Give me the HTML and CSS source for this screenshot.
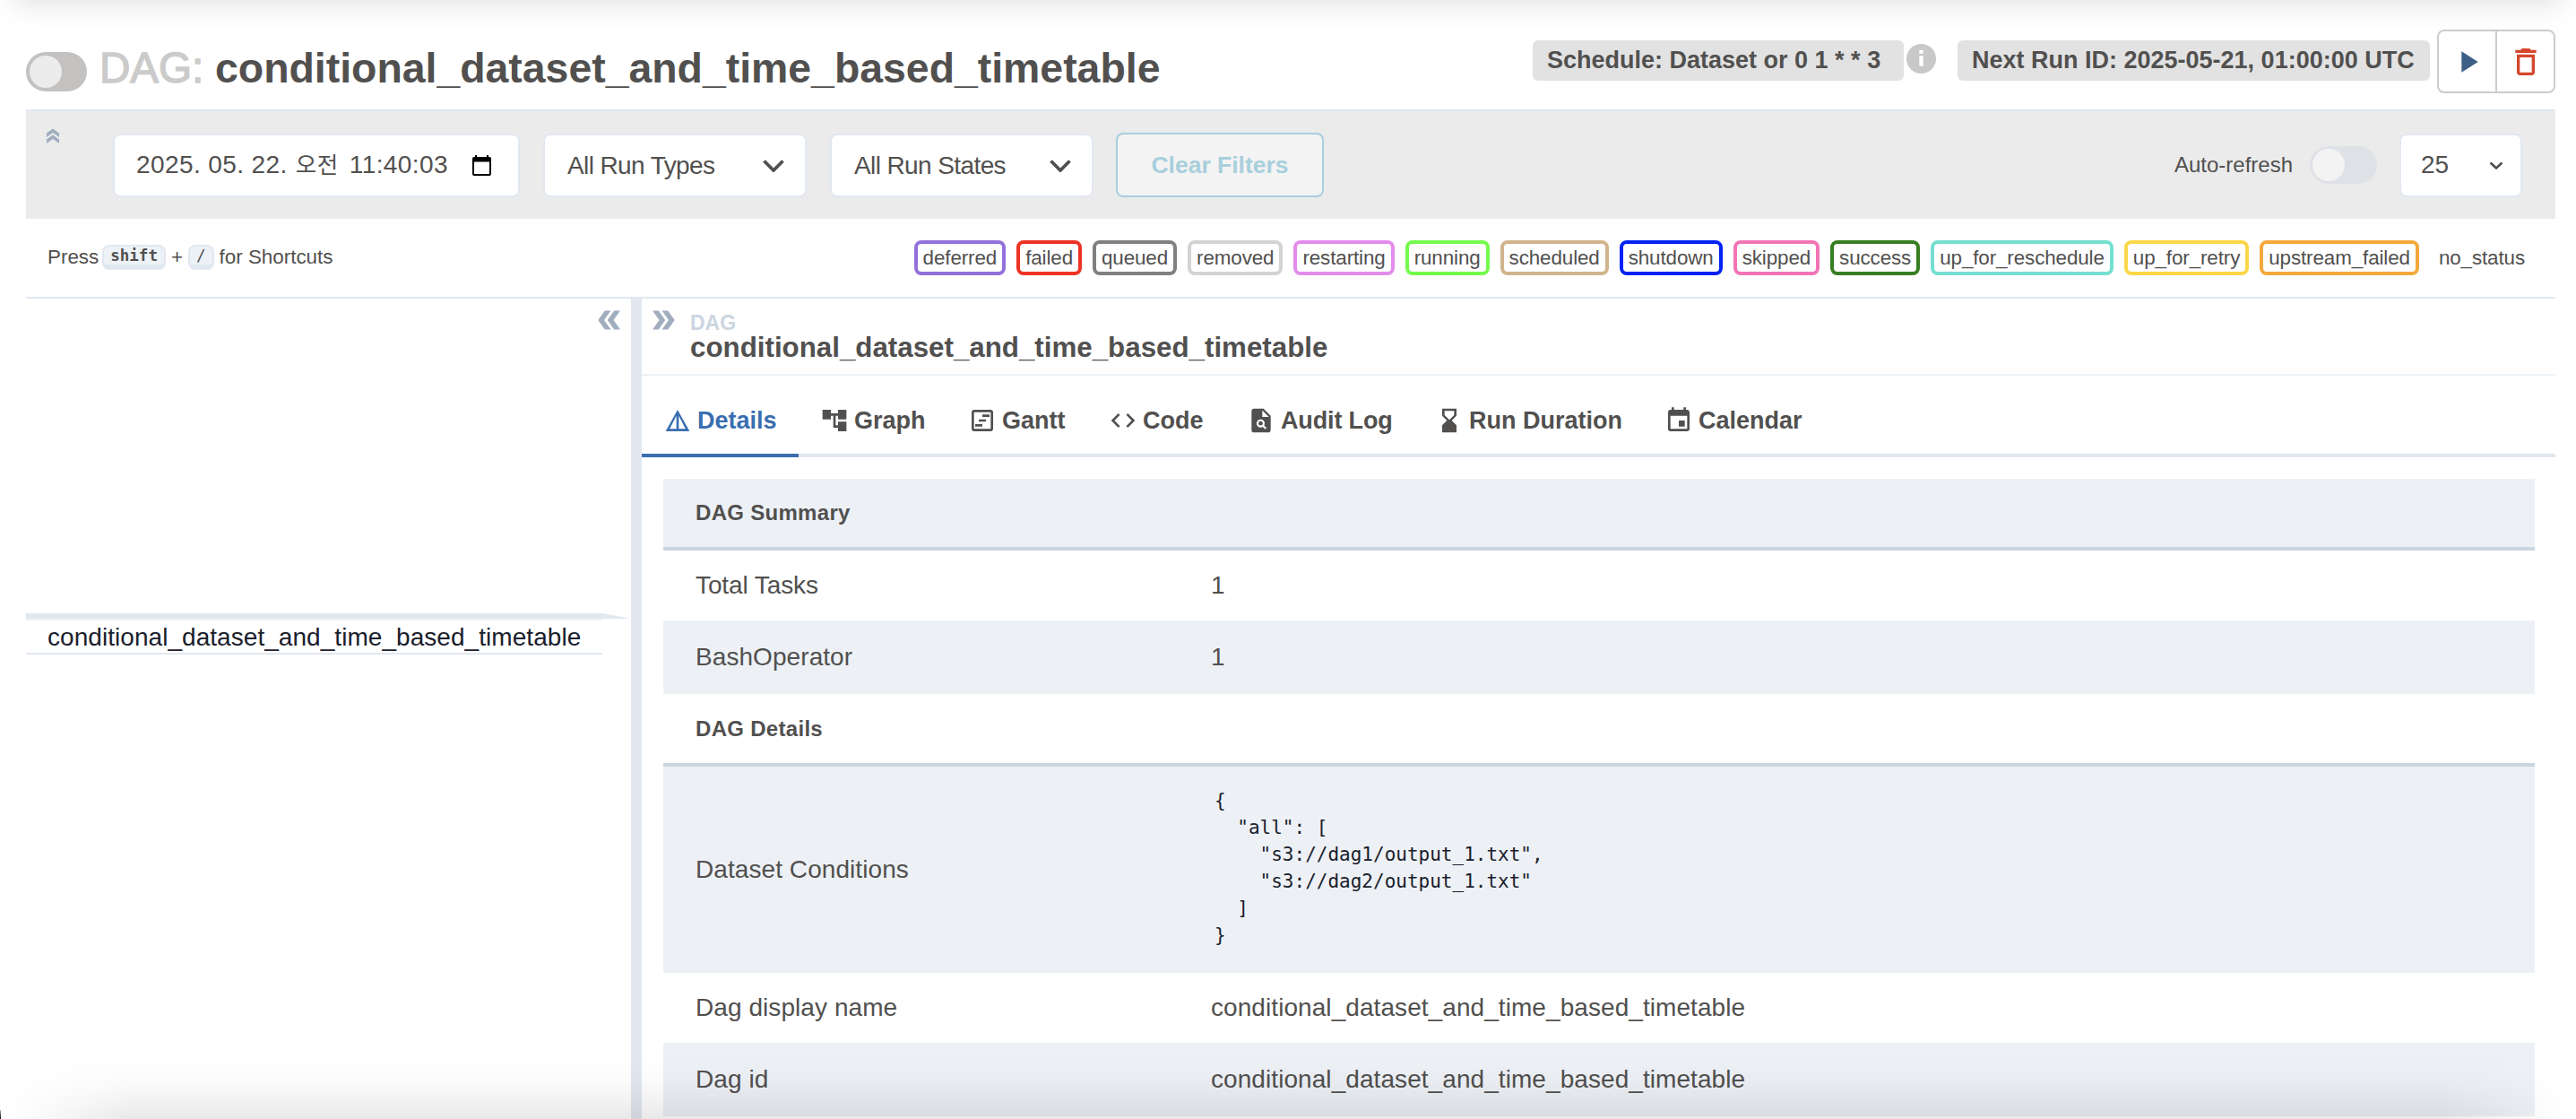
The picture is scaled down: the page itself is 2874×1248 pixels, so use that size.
FILE: index.html
```html
<!DOCTYPE html>
<html lang="ko">
<head>
    <meta charset="UTF-8">
    <meta name="viewport" content="width=device-width, initial-scale=1.0">
    <title>conditional_dataset_and_time_based_timetable - Airflow</title>
    <link rel="stylesheet" href="styles.css">
</head>
<body>
    <div class="nav-shadow"></div>

    <header class="dag-header">
        <span class="toggle"><span class="knob"></span></span>
        <h3 class="dag-title"><span class="muted">DAG:</span><strong>conditional_dataset_and_time_based_timetable</strong></h3>
        <div class="dag-meta">
            <span class="label schedule">Schedule: Dataset or 0 1 * * 3</span>
            <svg class="info" viewBox="0 0 24 24"><circle cx="12" cy="12" r="12"/><path d="M10.4 5h3.2v2.9h-3.2zM10.4 9.6h3.2V18h-3.2z"/></svg>
            <span class="label next-run">Next Run ID: 2025-05-21, 01:00:00 UTC</span>
            <div class="btn-group">
                <button class="play"><svg viewBox="0 0 24 24"><path d="M8 5v14l11-7z"/></svg></button>
                <button class="delete"><svg viewBox="0 0 24 24"><path d="M6 19c0 1.1.9 2 2 2h8c1.1 0 2-.9 2-2V7H6v12zM8 9h8v10H8V9zm7.5-5l-1-1h-5l-1 1H5v2h14V4z"/></svg></button>
            </div>
        </div>
    </header>

    <section class="filters">
        <svg class="double-arrow up" viewBox="0 0 24 24"><path d="M15.5 5H11l5 7-5 7h4.5l5-7zM8.5 5H4l5 7-5 7h4.5l5-7z"/></svg>
        <div class="field date">
            <span>2025. 05. 22. <span class="ampm">오전</span> 11:40:03</span>
            <svg viewBox="0 0 21 23"><path d="M3 0h2v2h11V0h2v2h1a2 2 0 0 1 2 2v17a2 2 0 0 1-2 2H2a2 2 0 0 1-2-2V4a2 2 0 0 1 2-2h1zM2 7.500v13.500h17V7.500z"/></svg>
        </div>
        <div class="field select">
            <span>All Run Types</span>
            <svg viewBox="0 0 24 14"><path d="M1.500 1.500L12 12 22.500 1.500"/></svg>
        </div>
        <div class="field select">
            <span>All Run States</span>
            <svg viewBox="0 0 24 14"><path d="M1.500 1.500L12 12 22.500 1.500"/></svg>
        </div>
        <button class="clear">Clear Filters</button>
        <span class="auto-refresh">Auto-refresh</span>
        <span class="switch"><span class="knob"></span></span>
        <div class="field count">
            <span>25</span>
            <svg viewBox="0 0 16 9"><path d="M1.500 1.500L8 7.500 14.500 1.500"/></svg>
        </div>
    </section>

    <section class="legend">
        <div class="shortcuts">Press <kbd>shift</kbd> + <kbd class="slash">/</kbd> for Shortcuts</div>
        <div class="states">
            <span class="state deferred">deferred</span>
            <span class="state failed">failed</span>
            <span class="state queued">queued</span>
            <span class="state removed">removed</span>
            <span class="state restarting">restarting</span>
            <span class="state running">running</span>
            <span class="state scheduled">scheduled</span>
            <span class="state shutdown">shutdown</span>
            <span class="state skipped">skipped</span>
            <span class="state success">success</span>
            <span class="state up-for-reschedule">up_for_reschedule</span>
            <span class="state up-for-retry">up_for_retry</span>
            <span class="state upstream-failed">upstream_failed</span>
            <span class="state no-status">no_status</span>
        </div>
    </section>

    <main class="panes">
        <div class="grid-pane">
            <svg class="double-arrow left" viewBox="0 0 24 24"><path d="M15.5 5H11l5 7-5 7h4.5l5-7zM8.5 5H4l5 7-5 7h4.5l5-7z"/></svg>
            <svg class="grid-top" viewBox="0 0 675 8"><path class="line" d="M0 6h643v2H0z"/><path d="M0 0h643l32 6H0z"/></svg>
            <div class="task">conditional_dataset_and_time_based_timetable</div>
        </div>
        <div class="splitter"></div>
        <div class="details-pane">
            <div class="crumb">
                <svg class="double-arrow" viewBox="0 0 24 24"><path d="M15.5 5H11l5 7-5 7h4.5l5-7zM8.5 5H4l5 7-5 7h4.5l5-7z"/></svg>
                <div>
                    <div class="crumb-type">DAG</div>
                    <div class="crumb-name">conditional_dataset_and_time_based_timetable</div>
                </div>
            </div>
            <nav class="tabs">
                <a class="tab details active"><svg viewBox="0 0 24 24"><path d="M2 21h20L12 3zm11-12.900L18.600 19H13zM11 8.100V19H5.400z"/></svg>Details</a>
                <a class="tab graph"><svg viewBox="0 0 24 24"><path d="M22 11V3h-7v3H9V3H2v8h7V8h2v10h4v3h7v-8h-7v3h-2V8h2v3z"/></svg>Graph</a>
                <a class="tab gantt"><svg viewBox="0 0 24 24"><path d="M19 3H5c-1.100 0-2 .9-2 2v14c0 1.100.9 2 2 2h14c1.100 0 2-.9 2-2V5c0-1.100-.9-2-2-2zm0 16H5V5h14zM12 7h6v2h-6zM9 11h6v2H9zM6 15h6v2H6z"/></svg>Gantt</a>
                <a class="tab code"><svg viewBox="0 0 24 24"><path d="M9.400 16.600L4.800 12l4.600-4.600L8 6l-6 6 6 6zm5.200 0l4.600-4.600-4.600-4.600L16 6l6 6-6 6z"/></svg>Code</a>
                <a class="tab audit"><svg viewBox="0 0 24 24"><path fill-rule="evenodd" d="M14 2H6c-1.100 0-2 .9-2 2v16c0 1.100.9 2 2 2h12c1.100 0 2-.9 2-2V8zm-1 7V3.500L18.500 9z"/><g class="lens"><circle cx="11.600" cy="14.400" r="2.600"/><path d="M13.500 16.300l2.500 2.500"/></g></svg>Audit Log</a>
                <a class="tab duration"><svg viewBox="0 0 24 24"><path d="M18 22l-.01-6L14 12l3.990-4.010L18 2H6v6l4 4-4 3.990V22zM8 7.500V4h8v3.500l-4 4z"/></svg>Run Duration</a>
                <a class="tab calendar"><svg viewBox="0 0 24 24"><path d="M17 12h-5v5h5zM16 1v2H8V1H6v2H5c-1.110 0-1.990.9-1.990 2L3 19a2 2 0 0 0 2 2h14c1.100 0 2-.9 2-2V5c0-1.100-.9-2-2-2h-1V1zm3 18H5V8h14z"/></svg>Calendar</a>
            </nav>
            <table class="info-table">
                <colgroup>
                    <col class="col-name">
                    <col>
                </colgroup>
                <tr class="head shaded"><th colspan="2">DAG Summary</th></tr>
                <tr><td class="total">Total Tasks</td><td>1</td></tr>
                <tr class="shaded tall"><td>BashOperator</td><td>1</td></tr>
                <tr class="head second"><th colspan="2">DAG Details</th></tr>
                <tr class="shaded conditions"><td>Dataset Conditions</td><td><pre>{
  "all": [
    "s3://dag1/output_1.txt",
    "s3://dag2/output_1.txt"
  ]
}</pre></td></tr>
                <tr><td>Dag display name</td><td>conditional_dataset_and_time_based_timetable</td></tr>
                <tr class="shaded tall"><td>Dag id</td><td>conditional_dataset_and_time_based_timetable</td></tr>
            </table>
        </div>
    </main>

    <div class="bottom-shadow"></div>
    <div class="corner"></div>
</body>
</html>
```
FILE: styles.css
```css
*,
*:before,
*:after {
    margin: 0;
    padding: 0;
    box-sizing: border-box;
}

html {
    overflow: hidden;
}

body {
    position: relative;
    height: 1248px;
    padding: 0 23px 0 29px;
    overflow: hidden;
    background-color: #fff;
    color: #51504f;
    font-family: "Liberation Sans", "Noto Sans CJK KR", sans-serif;
    font-size: 28px;
    display: flex;
    flex-direction: column;
}

svg {
    display: block;
    flex: none;
    fill: currentColor;
}

button {
    font-family: inherit;
}

.nav-shadow {
    position: absolute;
    top: -100px;
    left: 14px;
    right: 14px;
    height: 100px;
    box-shadow: 0 3px 32px rgba(0, 0, 0, 0.13);
}

.bottom-shadow {
    position: absolute;
    bottom: 0;
    left: 0;
    right: 0;
    height: 80px;
    background: linear-gradient(to top, rgba(0, 0, 0, 0.09), rgba(0, 0, 0, 0.05) 25%, rgba(0, 0, 0, 0.02) 50%, rgba(0, 0, 0, 0.005) 75%, transparent);
    -webkit-mask-image: linear-gradient(to right, transparent 10px, #000 150px, #000 2724px, transparent 2864px);
    mask-image: linear-gradient(to right, transparent 10px, #000 150px, #000 2724px, transparent 2864px);
}

.corner {
    position: absolute;
    left: 0;
    bottom: 0;
    width: 1px;
    height: 10px;
    background: linear-gradient(to bottom, #bbb, #000);
}

/* header */
.dag-header {
    height: 122px;
    padding-top: 30px;
    display: flex;
    align-items: center;
    flex: none;
}

.toggle,
.switch {
    display: flex;
    align-items: center;
    flex: none;
    border-radius: 22px;
}

.knob {
    width: 36px;
    height: 36px;
    border-radius: 50%;
}

.toggle {
    width: 68px;
    height: 44px;
    margin-top: 8px;
    padding-left: 4px;
    background-color: #c4c2c1;
}

.toggle .knob {
    background-color: #edecec;
}

.dag-title {
    display: flex;
    margin-left: 14px;
    font-size: 46.400px;
    font-weight: normal;
    line-height: 56px;
}

.dag-title .muted {
    width: 129px;
    color: #cbcbcb;
    font-size: 47.500px;
    -webkit-text-stroke: 1.500px #cbcbcb;
}

.dag-meta {
    display: flex;
    margin: -15px 0 0 auto;
    align-items: center;
}

.label {
    height: 45px;
    margin-top: -2px;
    padding-left: 16px;
    border-radius: 6px;
    background-color: #e2e2e2;
    font-size: 27px;
    font-weight: bold;
    line-height: 44px;
    white-space: nowrap;
}

.schedule {
    width: 414px;
}

.next-run {
    width: 527px;
}

.info {
    width: 33px;
    height: 33px;
    margin: -6px 24px 0 3px;
    color: #c8c8c8;
}

.info path {
    fill: #fff;
}

.btn-group {
    display: flex;
    width: 132px;
    height: 71px;
    margin-left: 8px;
    border: 2px solid #ccc;
    border-radius: 8px;
}

.btn-group button {
    flex: 1;
    display: flex;
    align-items: center;
    justify-content: center;
    border: 0;
    background: none;
}

.btn-group button + button {
    border-left: 2px solid #ccc;
}

.btn-group svg {
    width: 40px;
    height: 40px;
}

.play {
    color: #3d5f85;
}

.delete {
    color: #d5472d;
}

/* filter bar */
.filters {
    height: 122px;
    padding: 0 37px 0 17px;
    border-top: 2px solid #e2e8f0;
    background-color: #ebebeb;
    display: flex;
    align-items: center;
    flex: none;
}

.double-arrow {
    width: 36px;
    height: 36px;
    color: #a0aec0;
}

.double-arrow.up {
    width: 24px;
    height: 24px;
    margin: -64px 55px 0 1px;
    transform: rotate(-90deg);
}

.double-arrow.left {
    transform: scaleX(-1);
}

.field {
    height: 71px;
    display: flex;
    align-items: center;
    justify-content: space-between;
    border: 2px solid #e2e8f0;
    border-radius: 8px;
    background-color: #fff;
    white-space: nowrap;
}

.date {
    width: 454px;
    padding: 0 30px 0 24px;
    letter-spacing: 0.400px;
}

.date svg {
    width: 21px;
    height: 23px;
    color: #000;
}

.ampm {
    margin: 0 4px 0 1px;
    font-size: 25.500px;
    line-height: 1;
}

.select {
    width: 294px;
    margin-left: 26px;
    padding: 2px 23px 0 25px;
    letter-spacing: -0.600px;
}

.select svg {
    width: 24px;
    height: 14px;
    margin-top: -1px;
}

.select path,
.count path {
    fill: none;
    stroke: currentColor;
    stroke-width: 3.800;
}

.clear {
    width: 232px;
    height: 72px;
    margin-left: 25px;
    border: 2px solid #a8cfdc;
    border-radius: 8px;
    background-color: #f3f3f3;
    color: #a8cfdc;
    font-size: 26.500px;
    font-weight: bold;
}

.auto-refresh {
    margin-left: auto;
    font-size: 24px;
}

.switch {
    width: 75px;
    height: 42px;
    margin-left: 19px;
    padding-left: 3px;
    background-color: #dee2e7;
}

.switch .knob {
    background-color: #f3f3f3;
}

.count {
    width: 137px;
    margin-left: 25px;
    padding: 0 19px 0 22px;
}

.count svg {
    width: 16px;
    height: 9px;
}

.count path {
    stroke-width: 2.600;
}

/* state legend */
.legend {
    height: 89px;
    padding: 0 24px 1px 24px;
    border-bottom: 2px solid #e2e8f0;
    display: flex;
    align-items: center;
    justify-content: space-between;
    flex: none;
    font-size: 22.400px;
}

.shortcuts {
    display: flex;
    align-items: center;
}

kbd {
    height: 28px;
    margin: 0 6px;
    padding: 0 7px;
    border: 2px solid #e2e8f0;
    border-bottom-width: 6px;
    border-radius: 8px;
    background-color: #edf2f7;
    font-family: "DejaVu Sans Mono", monospace;
    font-size: 17.500px;
    font-weight: bold;
    line-height: 20px;
}

kbd:first-child {
    margin-left: 4px;
}

kbd.slash {
    font-weight: normal;
}

.states {
    display: flex;
    gap: 12px;
}

.state {
    height: 39px;
    padding: 0 6px;
    border: 4px solid;
    border-radius: 8px;
    line-height: 31px;
    letter-spacing: -0.110px;
}

.deferred { border-color: #9370db; }
.failed { border-color: #ee3224; }
.queued { border-color: #808080; }
.removed { border-color: #d3d3d3; }
.restarting { border-color: #e38cec; }
.running { border-color: #74fb4c; }
.scheduled { border-color: #d0b48d; }
.shutdown { border-color: #0022f5; }
.skipped { border-color: #f274b5; }
.success { border-color: #377d22; }
.up-for-reschedule { border-color: #74dfd0; }
.up-for-retry { border-color: #fbd748; }
.upstream-failed { border-color: #f4a83b; }
.no-status { border-color: transparent; }

/* panes */
.panes {
    flex: 1;
    display: flex;
    min-height: 0;
    overflow: hidden;
}

.grid-pane {
    width: 675px;
    padding-top: 6px;
}

.grid-pane .double-arrow {
    margin: 0 6px 0 auto;
}

.grid-top {
    width: 675px;
    height: 8px;
    margin-top: 309px;
    color: #e2e8f0;
}

.grid-top .line {
    fill: #edf2f7;
}

.task {
    width: 643px;
    height: 38px;
    padding-left: 24px;
    border-bottom: 2px solid #e2e8f0;
    color: #1a202c;
    line-height: 37px;
    letter-spacing: 0.050px;
}

.splitter {
    width: 12px;
    background-color: #e2e8f0;
}

.details-pane {
    flex: 1;
    min-width: 0;
}

.crumb {
    display: flex;
    height: 86px;
    padding: 6px 0 0 6px;
    border-bottom: 2px solid #edf2f7;
    font-weight: bold;
    line-height: 28px;
}

.crumb > div {
    margin: 7px 0 0 12px;
}

.crumb-type {
    height: 28px;
    color: #cbd5e0;
    font-size: 23px;
}

.crumb-name {
    font-size: 31.300px;
}

.tabs {
    display: flex;
    height: 91px;
    border-bottom: 4px solid #e2e8f0;
    font-size: 27px;
    font-weight: bold;
}

.tab {
    display: flex;
    align-items: center;
    gap: 6px;
    height: 91px;
    padding: 13px 0 4px 24px;
    white-space: nowrap;
}

.tab svg {
    width: 32px;
    height: 32px;
}

.tab.active {
    border-bottom: 4px solid #3a6eb0;
    padding-bottom: 0;
    color: #3a6eb0;
}

.details { width: 175px; }
.graph { width: 165px; }
.gantt { width: 157px; }
.code { width: 154px; }
.audit { width: 210px; letter-spacing: -0.150px; }
.duration { width: 256px; }

.lens {
    fill: none;
    stroke: #fff;
    stroke-width: 1.600;
}

/* details table */
.info-table {
    width: 2088px;
    margin: 24px 0 0 24px;
    border-spacing: 0;
    table-layout: fixed;
    letter-spacing: 0.070px;
}

.col-name {
    width: 575px;
}

.info-table tr {
    height: 78px;
}

.info-table .tall {
    height: 82px;
}

.info-table .head {
    height: 80px;
}

.info-table .second {
    height: 81px;
}

.info-table .conditions {
    height: 230px;
}

.info-table th {
    padding-left: 36px;
    border-bottom: 4px solid #cbd5e0;
    font-size: 24px;
    letter-spacing: 0.300px;
    text-align: left;
}

.info-table td {
    padding: 0 0 0 36px;
}

.shaded {
    background-color: #edf1f6;
}

.info-table .total {
    letter-spacing: -0.100px;
}

pre {
    margin-left: 4px;
    padding-bottom: 4px;
    color: #1a202c;
    font-family: "DejaVu Sans Mono", monospace;
    font-size: 21px;
    line-height: 30px;
    letter-spacing: 0;
}
```
